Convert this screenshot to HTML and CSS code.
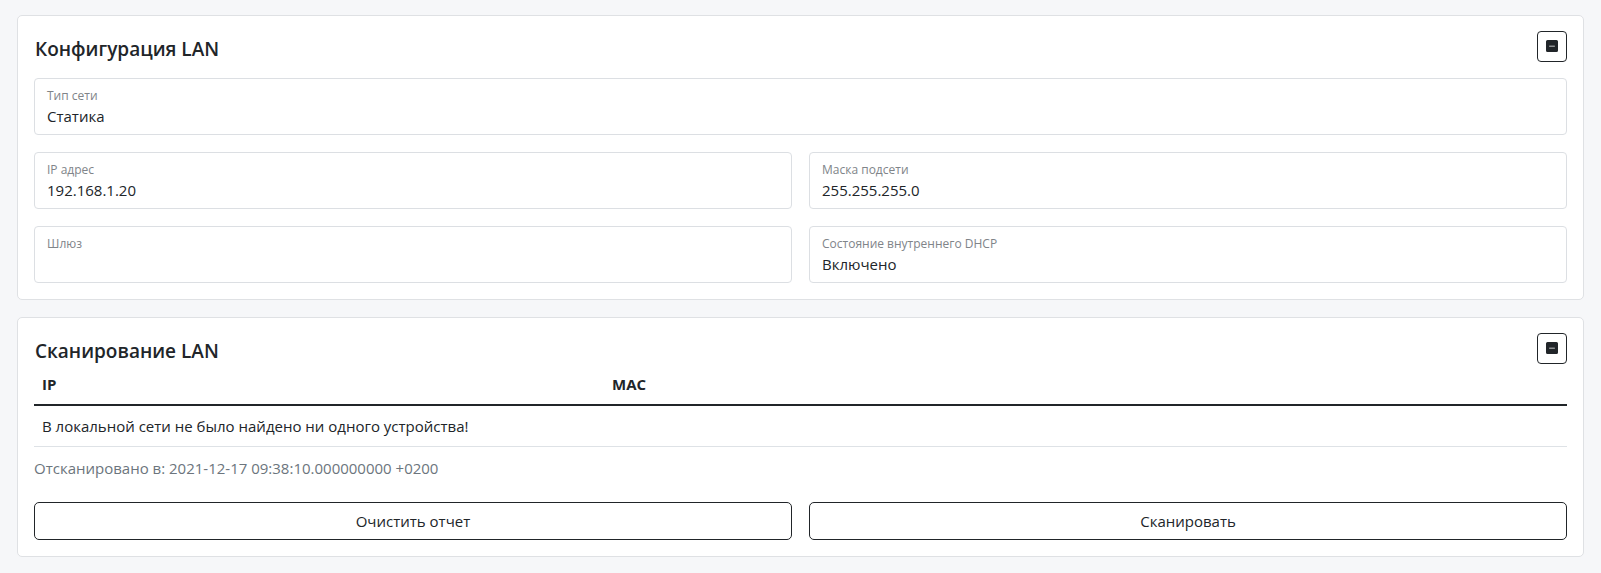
FILE: index.html
```html
<!DOCTYPE html>
<html lang="ru">
<head>
<meta charset="utf-8">
<title>LAN</title>
<link rel="stylesheet" href="styles.css">
</head>
<body>
<div class="page">
  <section class="card">
    <div class="card-head head-spaced">
      <h2 class="card-title">Конфигурация LAN</h2>
      <button class="collapse-btn" type="button" aria-label="Свернуть">
        <svg viewBox="0 0 16 16" width="12" height="12"><path fill="#212529" d="M2 0a2 2 0 0 0-2 2v12a2 2 0 0 0 2 2h12a2 2 0 0 0 2-2V2a2 2 0 0 0-2-2H2zm2.5 7.5h7a.5.5 0 0 1 0 1h-7a.5.5 0 0 1 0-1z"/></svg>
      </button>
    </div>
    <div class="fields">
      <div class="field wide">
        <div class="field-label">Тип сети</div>
        <div class="field-value">Статика</div>
      </div>
      <div class="field">
        <div class="field-label">IP адрес</div>
        <div class="field-value">192.168.1.20</div>
      </div>
      <div class="field">
        <div class="field-label">Маска подсети</div>
        <div class="field-value">255.255.255.0</div>
      </div>
      <div class="field">
        <div class="field-label">Шлюз</div>
        <div class="field-value"></div>
      </div>
      <div class="field">
        <div class="field-label">Состояние внутреннего DHCP</div>
        <div class="field-value">Включено</div>
      </div>
    </div>
  </section>

  <section class="card">
    <div class="card-head">
      <h2 class="card-title">Сканирование LAN</h2>
      <button class="collapse-btn" type="button" aria-label="Свернуть">
        <svg viewBox="0 0 16 16" width="12" height="12"><path fill="#212529" d="M2 0a2 2 0 0 0-2 2v12a2 2 0 0 0 2 2h12a2 2 0 0 0 2-2V2a2 2 0 0 0-2-2H2zm2.5 7.5h7a.5.5 0 0 1 0 1h-7a.5.5 0 0 1 0-1z"/></svg>
      </button>
    </div>
    <table class="scan-table">
      <thead>
        <tr><th class="col-ip">IP</th><th>MAC</th></tr>
      </thead>
      <tbody>
        <tr><td colspan="2">В локальной сети не было найдено ни одного устройства!</td></tr>
      </tbody>
    </table>
    <p class="scan-time">Отсканировано в: 2021-12-17 09:38:10.000000000 +0200</p>
    <div class="actions">
      <button class="action-btn" type="button">Очистить отчет</button>
      <button class="action-btn" type="button">Сканировать</button>
    </div>
  </section>
</div>
</body>
</html>
```

FILE: styles.css
```css
html, body {
  margin: 0;
  padding: 0;
  background: #f6f7f9;
}

body {
  font-family: "Open Sans", "Noto Sans", sans-serif;
  font-size: 15px;
  line-height: 24px;
  color: #212529;
}

.page {
  display: flex;
  flex-direction: column;
  gap: 17px;
  padding: 15px 17px 15px;
}

.card {
  background: #ffffff;
  border: 1px solid #dfe1e4;
  border-radius: 5px;
  padding: 16px;
}

.card-head {
  display: flex;
  align-items: center;
  justify-content: space-between;
  height: 30px;
}

.head-spaced {
  margin-bottom: 16px;
}

.card-title {
  margin: 0;
  font-size: 19px;
  font-weight: 600;
  line-height: 30px;
  color: #212529;
  padding: 3px 0 0 1px;
}

.collapse-btn {
  width: 30px;
  height: 31px;
  padding: 0;
  display: flex;
  align-items: center;
  justify-content: center;
  background: #fff;
  border: 1px solid #212529;
  border-radius: 4px;
  margin-top: -2px;
}

.collapse-btn svg {
  display: block;
}

.fields {
  display: grid;
  grid-template-columns: 1fr 1fr;
  gap: 17px 17px;
}

.field {
  box-sizing: border-box;
  height: 57px;
  border: 1px solid #dcdfe3;
  border-radius: 4px;
  padding: 9px 12px 0;
}

.field.wide {
  grid-column: 1 / -1;
}

.field-label {
  font-size: 12px;
  line-height: 16px;
  color: #808489;
}

.field-value {
  margin-top: 1px;
  font-size: 15px;
  line-height: 22px;
  min-height: 22px;
  color: #212529;
}

.scan-table {
  width: 100%;
  border-collapse: collapse;
}

.scan-table th {
  text-align: left;
  font-weight: 700;
  padding: 8px 8px;
  line-height: 24px;
  border-bottom: 2px solid #212529;
}

.scan-table .col-ip {
  width: 554px;
}

.scan-table td {
  padding: 8px 8px;
  line-height: 24px;
  border-bottom: 1px solid #dee2e6;
}

.scan-time {
  margin: 9px 0 0;
  color: #6c757d;
  line-height: 24px;
}

.actions {
  display: grid;
  grid-template-columns: 1fr 1fr;
  gap: 17px;
  margin-top: 22px;
}

.action-btn {
  font-family: inherit;
  font-size: 15px;
  line-height: 24px;
  height: 38px;
  padding: 6px 12px;
  background: #fff;
  color: #212529;
  border: 1px solid #212529;
  border-radius: 5px;
}
```
